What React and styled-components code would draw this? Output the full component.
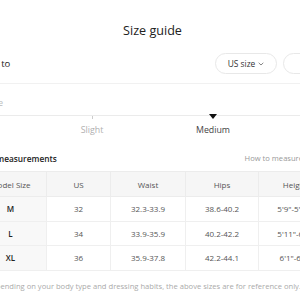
import React from "react";
import styled, { createGlobalStyle } from "styled-components";

const Global = createGlobalStyle`
  html, body { margin: 0; padding: 0; background: #fff; }
  body { font-family: "Open Sans", "Liberation Sans", sans-serif; overflow: hidden; }
  * { box-sizing: border-box; }
`;

const Viewport = styled.div`
  width: 300px;
  height: 300px;
  overflow: hidden;
  background: #fff;
`;

const Modal = styled.div`
  width: 389px;
  margin-left: -42px;
  padding: 0 16px;
  color: #222;
`;

const Title = styled.h1`
  margin: 0;
  padding-top: 22px;
  font-size: 12.6px;
  line-height: 18px;
  font-weight: 500;
  text-align: center;
  color: #222;
`;

const ConvertRow = styled.div`
  margin-top: 13px;
  display: flex;
  align-items: center;
  gap: 6px;
  padding-bottom: 9px;
  border-bottom: 1px solid #f1f1f1;
`;

const ConvertLabel = styled.span`
  flex: 1;
  margin-left: -4px;
  font-size: 9.5px;
  color: #222;
`;

const Pill = styled.button`
  height: 21px;
  width: ${(p) => p.$w}px;
  border: 1px solid #e8e8e8;
  border-radius: 11px;
  background: #fff;
  display: inline-flex;
  align-items: center;
  justify-content: center;
  gap: 3px;
  padding: 0;
  font-family: inherit;
  font-size: 8.4px;
  color: #333;
`;

const Chevron = () => (
  <svg width="6" height="4" viewBox="0 0 6 4" fill="none">
    <path d="M0.7 0.8 L3 3 L5.3 0.8" stroke="#666" strokeWidth="0.8" />
  </svg>
);

const FitSection = styled.div`
  padding-top: 13px;
`;

const FitLabel = styled.div`
  font-size: 8.5px;
  line-height: 12px;
  color: #bbb;
`;

const Steps = styled.div`
  margin-top: 6px;
  border-top: 1px solid #ebebeb;
  display: grid;
  grid-template-columns: repeat(4, 121px);
  margin-left: -63.5px;
  margin-right: -63.5px;
`;

const Step = styled.div`
  display: flex;
  flex-direction: column;
  align-items: center;
`;

const Tick = styled.span`
  width: 1px;
  height: 3px;
  background: #ccc;
  margin-bottom: 1px;
`;

const Marker = styled.span`
  width: 0;
  height: 0;
  margin-top: -2px;
  border-left: 4px solid transparent;
  border-right: 4px solid transparent;
  border-top: 5px solid #111;
  margin-bottom: 1px;
`;

const StepLabel = styled.span`
  margin-top: 4px;
  font-size: 8.8px;
  line-height: 12px;
  white-space: nowrap;
  color: ${(p) => (p.$active ? "#444" : "#b0b0b0")};
`;

const SectionHead = styled.div`
  margin-top: 15px;
  display: flex;
  justify-content: space-between;
  align-items: center;
  height: 14px;
`;

const SectionTitle = styled.h2`
  margin: 0;
  font-size: 8.3px;
  font-weight: 600;
  color: #222;
`;

const MeasureLink = styled.a`
  font-size: 7.6px;
  color: #999;
  padding-right: 28px;
`;

const Table = styled.table`
  margin-top: 6px;
  width: 357px;
  border-collapse: collapse;
  table-layout: fixed;
  font-size: 8px;
`;

const Th = styled.th`
  height: 25px;
  padding: 0;
  font-weight: 400;
  color: #555;
  background: #f6f6f6;
  border: 1px solid #ececec;
  text-align: center;
  white-space: nowrap;
`;

const Td = styled.td`
  height: 24.5px;
  padding: 0;
  text-align: center;
  color: #555;
  border: 1px solid #efefef;
  white-space: nowrap;
  background: ${(p) => (p.$label ? "#f8f8f8" : "#fff")};
  font-weight: ${(p) => (p.$label ? 600 : 400)};
  ${(p) => p.$label && "color: #222;"}
`;

const Note = styled.p`
  margin: 9.5px 0 0 12px;
  font-size: 7.6px;
  line-height: 12px;
  color: #aaa;
  white-space: nowrap;
`;

const cols = [72, 64, 75, 73, 73];
const rows = [
  ["M", "32", "32.3-33.9", "38.6-40.2", "5'9\"-5'11\""],
  ["L", "34", "33.9-35.9", "40.2-42.2", "5'11\"-6'1\""],
  ["XL", "36", "35.9-37.8", "42.2-44.1", "6'1\"-6'3\""],
];

const steps = ["Tight", "Slight", "Medium", "Loose"];
const current = 2;

export default function App() {
  return (
    <Viewport>
      <Global />
      <Modal>
        <Title>Size guide</Title>
        <ConvertRow>
          <ConvertLabel>Switch to</ConvertLabel>
          <Pill $w={62}>
            US size <Chevron />
          </Pill>
          <Pill $w={48}>&nbsp;</Pill>
        </ConvertRow>
        <FitSection>
          <FitLabel>Fit type</FitLabel>
          <Steps>
            {steps.map((s, i) => (
              <Step key={s}>
                {i === current ? <Marker /> : <Tick />}
                <StepLabel $active={i === current}>{s}</StepLabel>
              </Step>
            ))}
          </Steps>
        </FitSection>
        <SectionHead>
          <SectionTitle>Body measurements</SectionTitle>
          <MeasureLink>How to measure</MeasureLink>
        </SectionHead>
        <Table>
          <colgroup>
            {cols.map((w, i) => (
              <col key={i} style={{ width: w }} />
            ))}
          </colgroup>
          <thead>
            <tr>
              <Th>Model Size</Th>
              <Th>US</Th>
              <Th>Waist</Th>
              <Th>Hips</Th>
              <Th>Height</Th>
            </tr>
          </thead>
          <tbody>
            {rows.map((r) => (
              <tr key={r[0]}>
                {r.map((c, i) => (
                  <Td key={i} $label={i === 0}>
                    {c}
                  </Td>
                ))}
              </tr>
            ))}
          </tbody>
        </Table>
        <Note>
          Depending on your body type and dressing habits, the above sizes are for reference only.
        </Note>
      </Modal>
    </Viewport>
  );
}
